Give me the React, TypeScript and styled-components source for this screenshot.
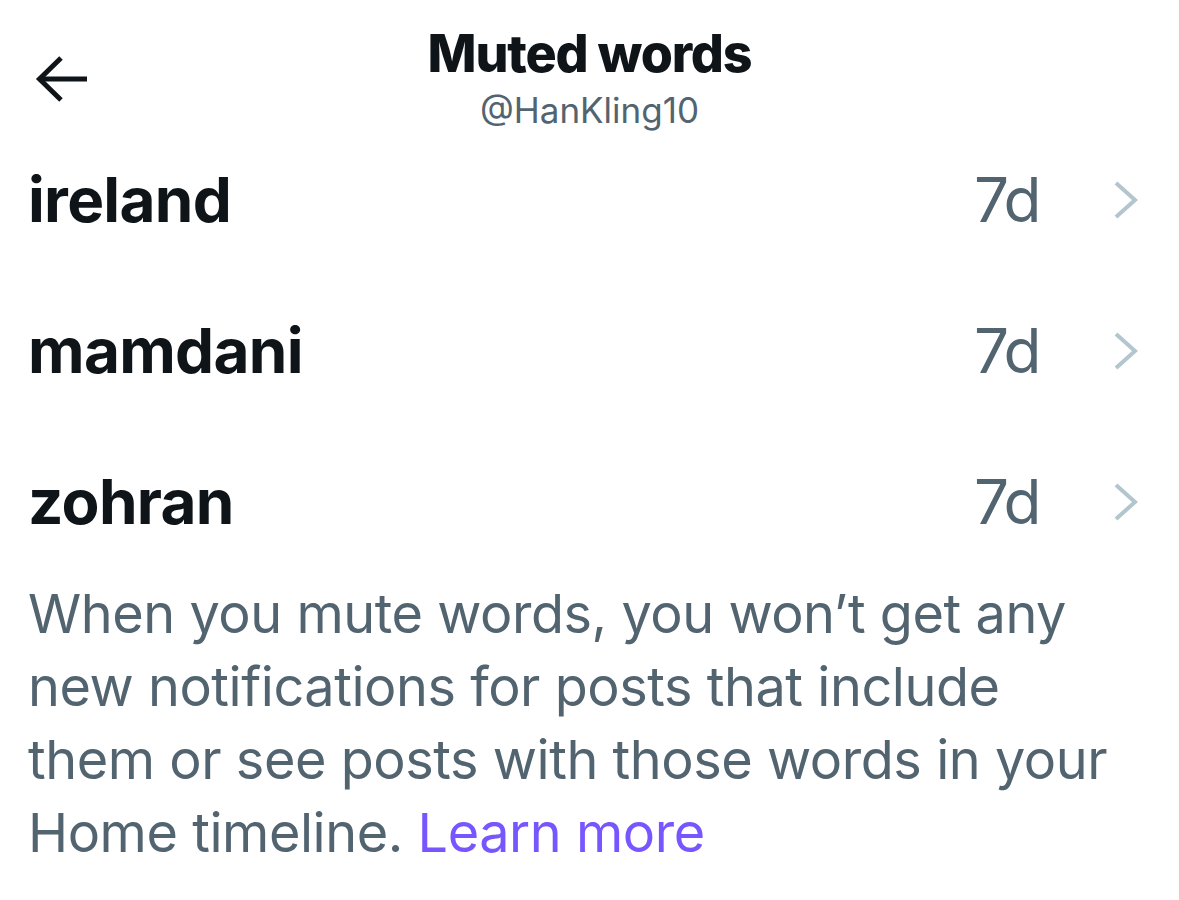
import React from "react";
import styled, { createGlobalStyle } from "styled-components";

const Global = createGlobalStyle`
  html, body { margin: 0; padding: 0; background: #ffffff; }
  body { font-family: Inter, "Noto Sans", sans-serif; -webkit-font-smoothing: antialiased; }
`;

const Page = styled.div`
  width: 1179px;
  min-height: 900px;
  background: #ffffff;
  display: flex;
  flex-direction: column;
`;

const Header = styled.header`
  display: grid;
  grid-template-columns: 1fr auto 1fr;
  padding-top: 24px;
  height: 124px;
  box-sizing: border-box;
`;

const BackButton = styled.button`
  grid-column: 1;
  justify-self: start;
  align-self: start;
  margin: 31px 0 0 33px;
  padding: 0;
  border: 0;
  background: none;
  display: flex;
  color: #0f1419;
`;

const TitleBlock = styled.div`
  grid-column: 2;
  display: flex;
  flex-direction: column;
  align-items: center;
  gap: 12px;
`;

const Title = styled.h1`
  margin: 0;
  font-size: 52px;
  line-height: 60px;
  font-weight: 800;
  color: #0f1419;
  letter-spacing: -1.2px;
`;

const Handle = styled.div`
  font-size: 35px;
  line-height: 28px;
  font-weight: 400;
  color: #536471;
`;

const List = styled.ul`
  list-style: none;
  margin: 0;
  padding: 0;
`;

const Row = styled.li`
  height: 151px;
  display: flex;
  align-items: center;
  padding: 0 40px 0 28px;
`;

const Word = styled.span`
  flex: 1;
  font-size: 62px;
  font-weight: 700;
  color: #0f1419;
  letter-spacing: -0.7px;
`;

const Duration = styled.span`
  font-size: 62px;
  font-weight: 400;
  color: #536471;
  letter-spacing: -2.5px;
  margin-right: 74px;
`;

const Note = styled.p`
  margin: 0;
  padding: 0 54px 0 28px;
  font-size: 54px;
  line-height: 73px;
  color: #536471;
  letter-spacing: -0.45px;
`;

const Link = styled.a`
  color: #7856ff;
  text-decoration: none;
`;

const ArrowIcon = () => (
  <svg width="56" height="48" viewBox="0 0 56 48" fill="none">
    <path d="M54 24H6" stroke="currentColor" strokeWidth="5" />
    <path d="M28 3L6.5 24L28 45" stroke="currentColor" strokeWidth="5" />
  </svg>
);

const Chevron = () => (
  <svg width="26" height="40" viewBox="0 0 26 40" fill="none">
    <path d="M3 3L22 20L3 37" stroke="#b3c5cd" strokeWidth="4" />
  </svg>
);

const words = ["ireland", "mamdani", "zohran"];

export default function App() {
  return (
    <Page>
      <Global />
      <Header>
        <BackButton aria-label="Back">
          <ArrowIcon />
        </BackButton>
        <TitleBlock>
          <Title>Muted words</Title>
          <Handle>@HanKling10</Handle>
        </TitleBlock>
      </Header>
      <List>
        {words.map((w) => (
          <Row key={w}>
            <Word>{w}</Word>
            <Duration>7d</Duration>
            <Chevron />
          </Row>
        ))}
      </List>
      <Note>
        When you mute words, you won’t get any new notifications for posts that
        include them or see posts with those words in your Home timeline.{" "}
        <Link href="#">Learn more</Link>
      </Note>
    </Page>
  );
}
